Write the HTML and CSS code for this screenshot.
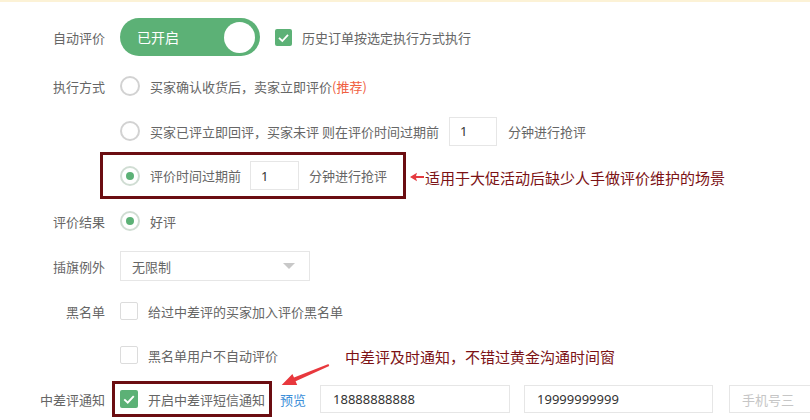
FILE: index.html
```html
<!DOCTYPE html>
<html lang="zh-CN">
<head>
<meta charset="utf-8">
<title>自动评价设置</title>
<link rel="stylesheet" href="styles.css">
</head>
<body>
<div class="page">
  <div class="row r1">
    <div class="label">自动评价</div>
    <div class="toggle"><span class="toggle-text">已开启</span><span class="knob"></span></div>
    <span class="cb cb-on"><svg viewBox="0 0 17 17" width="17" height="17"><polyline points="4,8.8 7.3,12 13,5.8" fill="none" stroke="#fff" stroke-width="1.8"/></svg></span>
    <span class="opt">历史订单按选定执行方式执行</span>
  </div>
  <div class="row r2">
    <div class="label">执行方式</div>
    <span class="radio"></span>
    <span class="opt">买家确认收货后，卖家立即评价<span class="rec">(推荐)</span></span>
  </div>
  <div class="row r3">
    <div class="label"></div>
    <span class="radio"></span>
    <span class="opt">买家已评立即回评，买家未评 则在评价时间过期前</span>
    <span class="num num-a">1</span>
    <span class="opt">分钟进行抢评</span>
  </div>
  <div class="row r4">
    <div class="hbox hbox-a">
      <span class="radio radio-on"></span>
      <span class="opt">评价时间过期前</span>
      <span class="num num-b">1</span>
      <span class="opt">分钟进行抢评</span>
    </div>
    <svg class="small-arrow" viewBox="0 0 14 10" width="14" height="10"><path d="M0 5 L7 0.8 L6 4 L14 4 L14 6 L6 6 L7 9.2 Z" fill="#e53a3f"/></svg>
    <span class="note">适用于大促活动后缺少人手做评价维护的场景</span>
  </div>
  <div class="row r5">
    <div class="label">评价结果</div>
    <span class="radio radio-on"></span>
    <span class="opt">好评</span>
  </div>
  <div class="row r6">
    <div class="label">插旗例外</div>
    <div class="select"><span>无限制</span><span class="tri"></span></div>
  </div>
  <div class="row r7">
    <div class="label">黑名单</div>
    <span class="cb"></span>
    <span class="opt">给过中差评的买家加入评价黑名单</span>
  </div>
  <div class="row r8">
    <div class="label"></div>
    <span class="cb"></span>
    <span class="opt">黑名单用户不自动评价</span>
    <span class="note note-b">中差评及时通知，不错过黄金沟通时间窗</span>
  </div>
  <div class="row r9">
    <div class="label label-tight">中差评通知</div>
    <div class="hbox hbox-b">
      <span class="cb cb-on"><svg viewBox="0 0 17 17" width="18" height="18"><polyline points="4,8.8 7.3,12 13,5.8" fill="none" stroke="#fff" stroke-width="1.8"/></svg></span>
      <span class="opt">开启中差评短信通知</span>
    </div>
    <a class="link">预览</a>
    <span class="phone">18888888888</span>
    <span class="phone phone-2">19999999999</span>
    <span class="phone phone-3 ph">手机号三</span>
  </div>
  <svg class="big-arrow" viewBox="0 0 56 30" width="56" height="30"><path d="M50.5 4 L16 17.6 L14.4 13.9 L3.7 25 L19.2 24.9 L17.6 21.2 L51.2 6 Z" fill="#e8383d"/></svg>
</div>
</body>
</html>
```
FILE: styles.css
```css
html, body {
  margin: 0;
  padding: 0;
  background: #fff;
  overflow: hidden;
}
body {
  font-family: "Noto Sans CJK SC", "Noto Sans", sans-serif;
  font-size: 13px;
  color: #666;
  width: 810px;
  height: 420px;
}
.page {
  position: relative;
  border-top: 2px solid #fcf2d6;
  padding-top: 10px;
  height: 408px;
  overflow: hidden;
}
.row {
  display: flex;
  align-items: center;
  white-space: nowrap;
}
.r1 { height: 50px; }
.r2 { height: 48px; }
.r3 { height: 42px; }
.r4 { height: 47px; }
.r5 { height: 44px; }
.r6 { height: 46px; }
.r7 { height: 44px; }
.r8 { height: 44px; }
.r9 { height: 44px; }

.label {
  width: 105px;
  flex: none;
  text-align: right;
  margin-right: 15px;
  color: #666;
}
.label-tight { margin-right: 7px; }

.opt { color: #666; }
.rec { color: #f0603f; }

.toggle {
  width: 140px;
  height: 38px;
  border-radius: 19px;
  background: #5cb176;
  display: flex;
  align-items: center;
  justify-content: space-between;
  padding: 0 5px 0 17px;
  box-sizing: border-box;
  margin-right: 15px;
  flex: none;
}
.toggle-text {
  color: #fff;
  font-size: 14px;
}
.knob {
  width: 31px;
  height: 31px;
  border-radius: 50%;
  background: #fff;
}

.cb {
  width: 18px;
  height: 18px;
  box-sizing: border-box;
  border: 1px solid #dcdcdc;
  border-radius: 2px;
  background: #fff;
  margin-right: 10px;
  flex: none;
  display: flex;
  align-items: center;
  justify-content: center;
}
.cb-on {
  background: #5cb176;
  border: none;
}
.r1 .cb { width: 17px; height: 17px; }

.radio {
  width: 20px;
  height: 20px;
  box-sizing: border-box;
  border: 2px solid #d2d2d2;
  border-radius: 50%;
  margin-right: 10px;
  flex: none;
  position: relative;
}
.radio-on {
  border-color: #d0ddd3;
}
.radio-on::after {
  content: "";
  position: absolute;
  left: 4px;
  top: 4px;
  width: 8px;
  height: 8px;
  border-radius: 50%;
  background: #5cb176;
}

.num {
  width: 48px;
  height: 29px;
  box-sizing: border-box;
  border: 1px solid #e6e6e6;
  background: #fff;
  color: #333;
  font-family: "Noto Sans", sans-serif;
  padding-left: 10px;
  display: flex;
  align-items: center;
  margin-right: 11px;
  flex: none;
}
.num-a { margin-left: 10px; }
.num-b { margin-left: 9px; width: 49px; margin-right: 10px; }

.hbox {
  box-sizing: border-box;
  border: 3px solid #6b0d11;
  display: flex;
  align-items: center;
  flex: none;
}
.hbox-a {
  margin-left: 100px;
  width: 306px;
  height: 47px;
  padding-left: 17px;
}
.hbox-b {
  width: 160px;
  height: 36px;
  padding-left: 5px;
}

.small-arrow {
  margin-left: 4px;
  margin-top: 3px;
  flex: none;
}
.note {
  color: #7c1215;
  font-size: 15px;
  margin-left: 1px;
  margin-top: 4px;
}
.note-b {
  margin-left: 67px;
  margin-top: 3px;
}

.select {
  width: 190px;
  height: 30px;
  box-sizing: border-box;
  border: 1px solid #e6e6e6;
  display: flex;
  align-items: center;
  justify-content: space-between;
  padding: 0 11px 0 11px;
  color: #666;
}
.tri {
  width: 0;
  height: 0;
  border-left: 6px solid transparent;
  border-right: 6px solid transparent;
  border-top: 6px solid #c8c8c8;
  margin-right: 3px;
}

.link {
  color: #3d8fd9;
  margin-left: 8px;
  margin-right: 14px;
}
.phone {
  width: 190px;
  height: 28px;
  box-sizing: border-box;
  border: 1px solid #e6e6e6;
  padding-left: 12px;
  display: flex;
  align-items: center;
  color: #333;
  font-family: "Noto Sans", sans-serif;
  flex: none;
}
.phone-2 { margin-left: 14px; width: 189px; }
.phone-3 { margin-left: 16px; width: 100px; }
.ph {
  color: #c6c6c6;
  font-family: "Noto Sans CJK SC", sans-serif;
}

.big-arrow {
  position: absolute;
  left: 278px;
  top: 358px;
}
```
